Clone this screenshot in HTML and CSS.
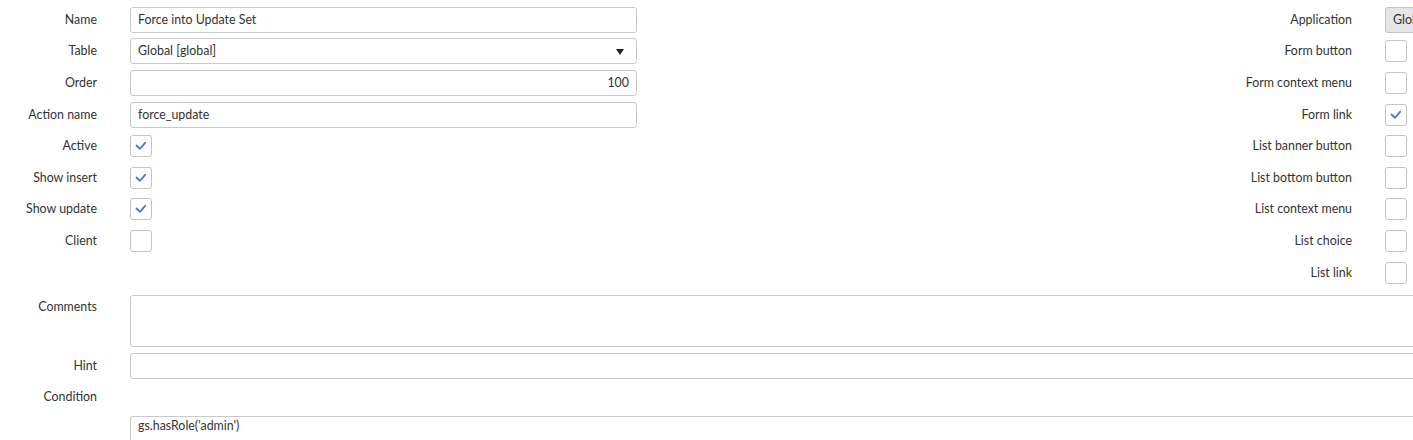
FILE: index.html
```html
<!DOCTYPE html>
<html>
<head>
	<title>UI Action - Force into Update Set</title>
	<meta charset="utf-8">
	<link rel="stylesheet" href="styles.css">
</head>
<body>
	<div class="page">
		<div class="top">
			<div class="col col-left">
				<div class="row">
					<label class="lbl">Name</label>
					<div class="input">Force into Update Set</div>
				</div>
				<div class="row">
					<label class="lbl">Table</label>
					<div class="input select">Global [global]<span class="caret"></span></div>
				</div>
				<div class="row">
					<label class="lbl">Order</label>
					<div class="input num">100</div>
				</div>
				<div class="row">
					<label class="lbl">Action name</label>
					<div class="input">force_update</div>
				</div>
				<div class="row">
					<label class="lbl">Active</label>
					<span class="check on"><svg viewBox="0 0 22 22"><path d="M6 10.5 L10 14 L15.5 7.5"/></svg></span>
				</div>
				<div class="row">
					<label class="lbl">Show insert</label>
					<span class="check on"><svg viewBox="0 0 22 22"><path d="M6 10.5 L10 14 L15.5 7.5"/></svg></span>
				</div>
				<div class="row">
					<label class="lbl">Show update</label>
					<span class="check on"><svg viewBox="0 0 22 22"><path d="M6 10.5 L10 14 L15.5 7.5"/></svg></span>
				</div>
				<div class="row">
					<label class="lbl">Client</label>
					<span class="check"></span>
				</div>
			</div>
			<div class="col col-right">
				<div class="row">
					<label class="lbl">Application</label>
					<div class="input readonly">Global</div>
				</div>
				<div class="row">
					<label class="lbl">Form button</label>
					<span class="check"></span>
				</div>
				<div class="row">
					<label class="lbl">Form context menu</label>
					<span class="check"></span>
				</div>
				<div class="row">
					<label class="lbl">Form link</label>
					<span class="check on"><svg viewBox="0 0 22 22"><path d="M6 10.5 L10 14 L15.5 7.5"/></svg></span>
				</div>
				<div class="row">
					<label class="lbl">List banner button</label>
					<span class="check"></span>
				</div>
				<div class="row">
					<label class="lbl">List bottom button</label>
					<span class="check"></span>
				</div>
				<div class="row">
					<label class="lbl">List context menu</label>
					<span class="check"></span>
				</div>
				<div class="row">
					<label class="lbl">List choice</label>
					<span class="check"></span>
				</div>
				<div class="row">
					<label class="lbl">List link</label>
					<span class="check"></span>
				</div>
			</div>
		</div>

		<div class="wide">
			<div class="row row-top">
				<label class="lbl">Comments</label>
				<div class="input area"></div>
			</div>
			<div class="row">
				<label class="lbl">Hint</label>
				<div class="input"></div>
			</div>
			<div class="row">
				<label class="lbl">Condition</label>
			</div>
			<div class="row row-code">
				<span></span>
				<div class="input code">gs.hasRole('admin')</div>
			</div>
		</div>
	</div>
</body>
</html>
```

FILE: styles.css
```css
html, body {
	margin: 0;
	padding: 0;
	background: #fff;
	overflow: hidden;
}
body {
	font-family: "Lato", "Liberation Sans", sans-serif;
	font-size: 12.4px;
	color: #333;
}
.page {
	width: 1413px;
	padding-top: 4px;
	overflow: hidden;
}
.top {
	display: flex;
}
.col-left {
	width: 1162px;
	flex: none;
}
.col-right {
	flex: 1;
	min-width: 0;
}
.row {
	display: grid;
	grid-template-columns: 97px 1fr;
	column-gap: 33px;
	align-items: center;
	height: 31.6px;
}
.col-left .row {
	grid-template-columns: 97px 507px;
}
.col-right .row {
	grid-template-columns: 190px 300px;
	column-gap: 33px;
}
.lbl {
	text-align: right;
	white-space: nowrap;
	line-height: 16px;
}
.input {
	box-sizing: border-box;
	height: 26px;
	line-height: 24px;
	padding: 0 7px;
	border: 1px solid #c9c9c9;
	border-radius: 3px;
	background: #fff;
	white-space: nowrap;
	overflow: hidden;
}
.select {
	position: relative;
}
.caret {
	position: absolute;
	right: 12px;
	top: 10px;
	width: 0;
	height: 0;
	border-left: 4px solid transparent;
	border-right: 4px solid transparent;
	border-top: 6px solid #222;
}
.num {
	text-align: right;
}
.readonly {
	background: #e6e6e6;
	border-color: #c4c4c4;
}
.check {
	box-sizing: border-box;
	width: 22px;
	height: 22px;
	border: 1px solid #c4c4c4;
	border-radius: 3px;
	background: #fff;
}
.check svg {
	display: block;
	width: 20px;
	height: 20px;
}
.check path {
	fill: none;
	stroke: #3f7acb;
	stroke-width: 2;
	stroke-linecap: round;
	stroke-linejoin: round;
}
.wide {
	margin-top: 6.6px;
}
.wide .row {
	grid-template-columns: 97px 1400px;
}
.wide .row-top {
	height: auto;
	align-items: start;
	margin-bottom: 3px;
}
.row-top .lbl {
	line-height: 23px;
}
.area {
	height: 52px;
}
.row-code {
	margin-top: 2.6px;
	align-items: start;
}
.code {
	height: 40px;
	line-height: 18px;
	padding-top: 0;
	border-bottom: none;
	border-radius: 3px 3px 0 0;
}
```
